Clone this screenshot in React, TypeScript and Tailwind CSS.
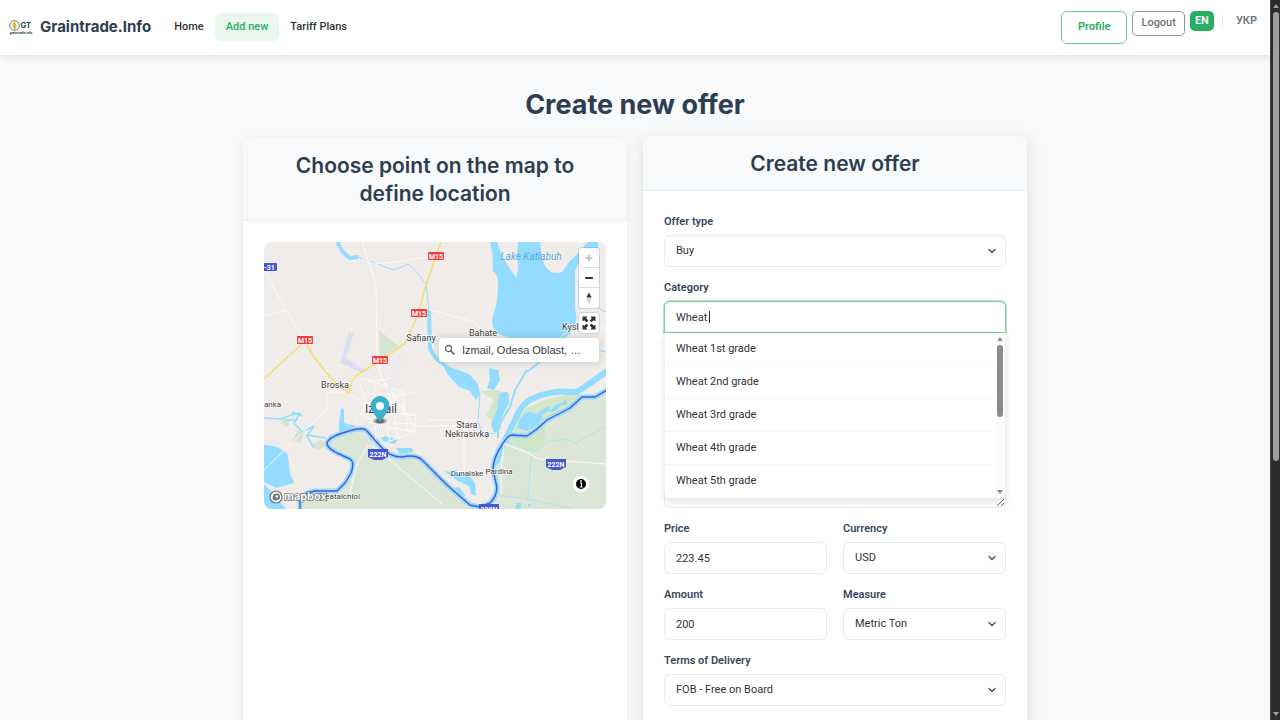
import { useState } from "react";
import type { ReactNode } from "react";
import { ChevronDown } from "lucide-react";

const grades = ["1st", "2nd", "3rd", "4th", "5th"];

const fieldClass =
  "block h-8 w-full appearance-none rounded-[6px] border border-[#e6edf0] bg-white px-[11px] text-[11px] text-[#333] outline-none";

const riverRoad =
  "M36 267V256L43 251L51 249H73L81 241L87 231Q91 220 86 217L73 211Q60 204 64 199Q67 194 85 189Q98 185 102 188L118 206Q126 215 138 215Q152 212 158 218L183 243L206 263L216 265L226 261Q235 252 232 241L229 228Q229 216 238 203Q244 193 248 193L263 194L273 187L283 178L306 166L318 155H331L343 148";

const Logo = () => (
  <svg viewBox="0 0 24 16" className="h-4 w-6 shrink-0" aria-hidden="true">
    <circle cx="5.5" cy="6.5" r="4.8" fill="#fff" stroke="#3c5a4c" strokeWidth="0.8" />
    <path d="M5.5 2.7C8.1 4.7 8.1 8.3 5.5 10.5C2.9 8.3 2.9 4.7 5.5 2.7Z" fill="#e9c64a" />
    <path d="M5.5 3.5V11" stroke="#a98a25" strokeWidth="0.5" />
    <text x="11.5" y="9" fontFamily="Inter, sans-serif" fontSize="7.5" fontWeight="700" fill="#26423c">GT</text>
    <text x="12" y="14.8" textAnchor="middle" fontFamily="Roboto, sans-serif" fontSize="3.4" fontWeight="700" fill="#26423c">
      graintrade.info
    </text>
  </svg>
);

const M15 = ({ x, y }: { x: number; y: number }) => (
  <g>
    <rect x={x - 8} y={y - 4} width="16" height="8" rx="1" fill="#f13c3f" />
    <text x={x} y={y + 2.5} textAnchor="middle" fontSize="7" fontWeight="700" fill="#fff">M15</text>
  </g>
);

const N222 = ({ x, y }: { x: number; y: number }) => (
  <g>
    <path d={`M${x - 10} ${y - 5}H${x + 10}V${y + 3}L${x + 4} ${y + 6}H${x - 4}L${x - 10} ${y + 3}Z`} fill="#4558cd" />
    <text x={x} y={y + 2.5} textAnchor="middle" fontSize="7" fontWeight="700" fill="#fff">222N</text>
  </g>
);

const MapDrawing = () => (
  <svg viewBox="0 0 342 267" className="block w-full" fontFamily="Roboto, sans-serif">
    <rect width="342" height="267" fill="#efecea" />
    {/* south bank */}
    <path d={`${riverRoad}V267Z`} fill="#dce6d6" />
    <path d="M115 88L134 104L116 117Z" fill="#d5e4d0" />
    <path d="M15 180L26 177L24 185ZM28 199L33 189L40 190L37 201ZM47 203L57 198L62 203L54 208Z" fill="#d5e4cc" />
    <path d="M216 149L232 148L246 152L240 168L230 180L222 174L230 158ZM227 128H236L232 140ZM254 178L262 166L281 158L305 152L318 152L306 164L283 176L263 192L249 191Z" fill="#d3e7c8" />
    <path d="M248 193L263 194L281 181L282 198L272 210L262 206L246 198Z" fill="#cfe6c4" />
    {/* industrial zone */}
    <path d="M85 89L90 91L82 116L94 124L104 128L98 131L85 125L76 121Z" fill="#dadff0" />
    {/* lakes */}
    <g fill="#93dcff">
      <path d="M226 0Q229 9 229 29Q235 33 234 45L233 59L229 74Q226 84 234 92L246 96H276L296 97Q304 96 308 88Q315 76 311 68L311 29L316 18L334 8V0H324L316 9L306 19L298 30Q294 32 287 30Q280 25 278 16L276 0H254L253 16Q256 26 252 36L239 16L233 0Z" />
      <path d="M176 118L186 125L205 132L214 142L216 152L212 158L206 149L195 145L184 133Z" />
      <path d="M225 126L234 128L236 138L230 148L223 146L226 138ZM256 99L272 101L258 118L261 110Z" />
      <path d="M235 151L244 150L245 161L238 175L236 188L230 191L227 182L233 168Z" />
      <path d="M253 186Q256 171 266 170L279 174L275 182L263 189ZM272 172L284 164L286 168L276 174ZM285 170L291 163L298 161L292 169ZM295 164L302 157L303 162Z" />
      <path d="M0 203Q14 202 24 213L26 232L30 241L12 246L0 240ZM0 242L10 252L22 267H0Z" />
      <path d="M75 196L75 182L77 166L80 167L80 181L92 184L85 191ZM117 196Q120 192 134 198L130 202L120 200ZM132 206L148 206L149 210L136 212Z" />
      <path d="M181 229L192 228L204 232L211 241L212 254L207 252L205 244L194 239L184 232ZM191 246L195 245L199 250L202 254L196 252Z" />
      <path d="M253 261L258 261L256 267H251ZM264 262L267 262L265 266Z" />
    </g>
    <g fill="none" stroke="#93dcff" strokeLinejoin="round">
      <path d="M73 -2Q77 11 86 16L94 15" strokeWidth="4" />
      <path d="M94 15L130 28L144 22L151 28L162 42L165 68" strokeWidth="1" />
      <path d="M165 68L166 106Q169 116 180 122" strokeWidth="4" />
      <path d={riverRoad} strokeWidth="5" />
      <path d="M231 222L240 200L251 178Q258 160 270 156Q289 148 304 150H313L325 142L343 129" strokeWidth="6" />
      <path d="M263 128L251 148L246 165L234 185V196M300 112L278 118L263 130" strokeWidth="2" />
      <path d="M0 176L17 177L27 173L36 171L30 181L38 190L50 184L43 194L50 206M20 178L34 178M43 193L62 196M28 170L38 174" strokeWidth="1.5" />
      <path d="M216 150L214 180L218 190L231 192M326 106L342 110M326 62L342 70" strokeWidth="1" />
      <path d="M275 208L283 200L300 197L312 201L328 192L342 184M267 214L264 256M236 254L260 256L310 267M240 202L245 200L262 207L275 210" stroke="#aee0ee" strokeWidth="1" />
    </g>
    {/* minor roads */}
    <g fill="none" stroke="#fbfaf9" strokeWidth="1">
      <path d="M0 28L22 68L41 99M0 74L22 68M98 0L112 42L113 118L118 138M98 16L110 22L130 20L165 15M165 68L182 72L210 80L220 92M342 112L296 96L322 72L342 88" />
      <path d="M0 228L60 170H63V128M63 150H85M118 136L150 184H210M200 184V230L183 229M164 178H215" />
      <path d="M240 202L262 210L275 217L342 222M240 202L237 232V252M86 252L92 225L104 203L113 207L178 262M86 252L60 258" />
      <path d="M85 151L110 170L112 200M96 142L102 160L118 158L150 150M98 136L140 150L138 172L152 174L150 190L118 202M104 140L130 136M100 152H140M100 160L142 166M118 158L126 200M128 158L134 196M140 160L144 190M96 172L114 180L152 182M104 180L148 190M110 140L112 168M90 178L104 164M120 138L130 170M122 172H152M120 186L150 188" />
    </g>
    <path d="M141 103L130 134L119 160L114 192" fill="none" stroke="#cfdbea" strokeWidth="2" />
    <path d="M141 103L130 134L119 160L114 192" fill="none" stroke="#fff" strokeWidth="1" />
    {/* highways */}
    <g fill="none" stroke="#f7dd72" strokeWidth="1.6" strokeLinejoin="round">
      <path d="M0 137L41 99L50 115L66 135L73 143L85 151L88 139L93 133L116 119L141 101L155 71L161 46L177 0" />
    </g>
    <path d={riverRoad} fill="none" stroke="#5058d0" strokeWidth="1.4" strokeLinejoin="round" />
    {/* road shields */}
    <M15 x={172} y={14} />
    <M15 x={155} y={71} />
    <M15 x={41} y={98} />
    <M15 x={116} y={118} />
    <rect x="-1" y="21" width="14" height="8" rx="1" fill="#4558cd" />
    <text x="0" y="27.5" fontSize="7" fontWeight="700" fill="#fff">-31</text>
    <N222 x={114} y={212} />
    <N222 x={292} y={222} />
    <N222 x={225} y={267} />
    {/* place names */}
    <g fontSize="9" fill="#3d3d3d" stroke="#fff" strokeOpacity="0.7" strokeWidth="1.5" paintOrder="stroke" textAnchor="middle">
      <text x="157" y="99">Safiany</text>
      <text x="219" y="94">Bahate</text>
      <text x="298" y="88" textAnchor="start">Kysly</text>
      <text x="71" y="146">Broska</text>
      <text x="0" y="165" fontSize="8" textAnchor="start">anka</text>
      <text x="203" y="186">Stara</text>
      <text x="203" y="195">Nekrasivka</text>
      <text x="203" y="234" fontSize="8">Dunaiske</text>
      <text x="235" y="232" fontSize="8">Pardina</text>
      <text x="76" y="257" fontSize="8">Ceatalchioi</text>
      <text x="117" y="171" fontSize="12">Izmail</text>
    </g>
    <text x="267" y="18" textAnchor="middle" fontSize="10" fontStyle="italic" fill="#57aedb">Lake Katlabuh</text>
    {/* marker */}
    <ellipse cx="116" cy="179" rx="7" ry="3" fill="#000" opacity="0.3" />
    <ellipse cx="116" cy="179" rx="4" ry="2" fill="#000" opacity="0.4" />
    <path d="M116 180C112 173 107 169 107 163.500A9 9 0 0 1 125 163.500C125 169 120 173 116 180Z" fill="#3fb1ce" stroke="#3397b1" strokeWidth="0.8" />
    <circle cx="116" cy="164" r="4" fill="#fff" />
    {/* attribution */}
    <circle cx="12" cy="255" r="6" fill="#fff" fillOpacity="0.8" stroke="#777" strokeWidth="1.2" />
    <path d="M9 258C8 253.5 10 251.5 12.5 251.5A3.2 3.2 0 0 1 13 258Q11 258.8 9 258Z" fill="#777" />
    <circle cx="12.8" cy="254.5" r="1.3" fill="#fff" />
    <text x="20" y="258" fontFamily="Inter, sans-serif" fontSize="11" fontWeight="600" fill="#fff" stroke="#777" strokeWidth="1.4" paintOrder="stroke">mapbox</text>
    <circle cx="317" cy="242" r="8" fill="#fff" />
    <circle cx="317" cy="242" r="5" fill="#000" />
    <path d="M316 241H317.5V245M315.8 245H318.8" stroke="#fff" strokeWidth="1.2" fill="none" />
    <circle cx="317" cy="239" r="0.9" fill="#fff" />
  </svg>
);

const MapPanel = () => (
  <div className="relative overflow-hidden rounded-[8px]">
    <MapDrawing />
    <div className="absolute top-1.5 right-[7px] flex flex-col items-end gap-[5px]">
      <div className="flex w-5 flex-col divide-y divide-[#ddd] rounded-[3px] bg-white shadow-[0_0_0_1px_rgba(0,0,0,0.1)]">
        <button aria-label="Zoom in" className="flex h-5 items-center justify-center">
          <svg viewBox="0 0 20 20" className="size-5"><path d="M10 6.500V13.500M6.500 10H13.500" stroke="#bbb" strokeWidth="1.6" /></svg>
        </button>
        <button aria-label="Zoom out" className="flex h-5 items-center justify-center">
          <svg viewBox="0 0 20 20" className="size-5"><path d="M7 10H13" stroke="#333" strokeWidth="2.2" strokeLinecap="round" /></svg>
        </button>
        <button aria-label="Reset bearing" className="flex h-5 items-center justify-center">
          <svg viewBox="0 0 20 20" className="size-5">
            <path d="M10 4.5L7.3 9.5H12.7Z" fill="#333" />
            <path d="M10 15.5L7.3 10.5H12.7Z" fill="#ccc" />
          </svg>
        </button>
      </div>
      <button aria-label="Full screen" className="size-5 rounded-[3px] bg-white shadow-[0_0_0_1px_rgba(0,0,0,0.1)]">
        <svg viewBox="0 0 20 20" className="size-5">
          <path
            d="M3.5 3.5H8.5L7.2 5.2L9.3 7.6L7.6 9.3L5.2 7.2L3.5 8.5ZM16.5 3.5V8.5L14.8 7.2L12.4 9.3L10.7 7.6L12.8 5.2L11.5 3.5ZM3.5 16.5V11.5L5.2 12.8L7.6 10.7L9.3 12.4L7.2 14.8L8.5 16.5ZM16.5 16.5H11.5L12.8 14.8L10.7 12.4L12.4 10.7L14.8 12.8L16.5 11.5Z"
            fill="#333"
          />
        </svg>
      </button>
      <div className="flex h-6 w-40 items-center gap-1.5 rounded-[3px] bg-white px-[5px] shadow-[0_0_7px_2px_rgba(0,0,0,0.1)]">
        <svg viewBox="0 0 12 12" className="size-3 shrink-0" aria-hidden="true">
          <circle cx="4.5" cy="4.5" r="3" fill="none" stroke="#666" strokeWidth="1.3" />
          <path d="M6.8 6.8L10.5 10.5" stroke="#666" strokeWidth="1.7" />
        </svg>
        <input
          aria-label="Search location"
          defaultValue="Izmail, Odesa Oblast, …"
          className="w-full min-w-0 bg-transparent font-['Liberation_Sans',sans-serif] text-[11px] text-[#404040] outline-none"
        />
      </div>
    </div>
  </div>
);

const Field = ({ id, label, children }: { id: string; label: string; children: ReactNode }) => (
  <div className="min-w-0 flex-1">
    <label htmlFor={id} className="mb-[3px] block text-[11px] leading-5 font-semibold text-[#34495e]">
      {label}
    </label>
    {children}
  </div>
);

const SelectField = ({ id, label, value }: { id: string; label: string; value: string }) => (
  <Field id={id} label={label}>
    <div className="relative">
      <select id={id} className={fieldClass}>
        <option>{value}</option>
      </select>
      <ChevronDown className="pointer-events-none absolute top-2.5 right-2 size-3 text-[#454b51]" strokeWidth={2.5} />
    </div>
  </Field>
);

const Suggestions = () => (
  <div className="absolute top-full right-0 left-0 z-10 flex overflow-hidden rounded-b-[6px] border border-t-0 border-[#f0f0f0] bg-white shadow-[0_3px_8px_rgba(0,0,0,0.12)]">
    <ul className="flex-1">
      {grades.map((grade) => (
        <li key={grade} className="flex h-[33px] items-center border-b border-[#f8f8f8] px-[11px] text-[11px] text-[#333]">
          Wheat {grade} grade
        </li>
      ))}
    </ul>
    {/* list scrollbar */}
    <div className="flex w-2.5 flex-col items-center bg-[#fcfcfc] py-1">
      <svg viewBox="0 0 6 4" className="h-1 w-1.5"><path d="M3 0L6 4H0Z" fill="#8b8b8b" /></svg>
      <div className="mt-1 h-[72px] w-1.5 rounded-full bg-[#8b8b8b]" />
      <svg viewBox="0 0 6 4" className="mt-auto h-1 w-1.5"><path d="M3 4L6 0H0Z" fill="#8b8b8b" /></svg>
    </div>
  </div>
);

const Header = () => (
  <header className="relative z-20 flex h-[55px] shrink-0 items-start justify-between bg-white pr-2 pl-[9px] shadow-[0_2px_8px_rgba(0,0,0,0.1)]">
    <nav className="flex h-[54px] items-center text-[11px] font-medium text-[#333]">
      <a href="#home" className="mr-3 flex items-center gap-[7px] font-[Inter,sans-serif] text-[15px] font-bold text-[#2c3e50]">
        <Logo />
        Graintrade.Info
      </a>
      <a href="#home" className="px-[11px] py-1.5">Home</a>
      <a href="#new" className="rounded-[6px] bg-[#e9f7ef] px-[11px] py-1.5 text-[#27ae60]">Add new</a>
      <a href="#tariffs" className="px-[11px] py-1.5">Tariff Plans</a>
    </nav>
    <div className="flex items-start pt-[11px]">
      <button className="h-[33px] rounded-[6px] border border-[#6cc892] px-4 text-[11px] font-semibold text-[#27ae60]">Profile</button>
      <button className="ml-[5px] h-[25px] rounded-[5px] border border-[#8d9499] px-2 text-[11px] font-medium text-[#6c757d]">Logout</button>
      <button className="ml-[5px] h-5 rounded-[5px] bg-[#27ae60] px-[5px] text-[11px] font-semibold text-white">EN</button>
      <span className="mx-2 mt-1 h-3 w-px bg-[#e6ebee]" />
      <button className="h-5 px-[5px] text-[11px] font-semibold text-[#6c757d]">УКР</button>
    </div>
  </header>
);

const App = () => {
  const [category, setCategory] = useState("Wheat ");

  return (
    <div className="flex h-screen overflow-hidden bg-[#f8f9fb] font-[Roboto,sans-serif]">
      <div className="flex min-w-0 flex-1 flex-col">
        <Header />
        <main className="mx-auto flex w-full max-w-[784px] flex-1 flex-col">
          <h1 className="mt-8 mb-4 text-center font-[Inter,sans-serif] text-[27px] leading-[35px] font-bold text-[#2c3e50]">Create new offer</h1>
          <div className="flex flex-1 gap-4">
            <section className="flex-1 rounded-t-[8px] bg-white shadow-[0_2px_8px_rgba(0,0,0,0.08)]">
              <h2 className="rounded-t-[8px] border-b border-[#e9eef1] bg-[#f8f9fb] px-5 pt-[14px] pb-3 text-center font-[Inter,sans-serif] text-[21px] leading-7 font-semibold text-[#2c3e50]">
                Choose point on the map to define location
              </h2>
              <div className="p-[21px]">
                <MapPanel />
              </div>
            </section>

            <section className="flex-1 -translate-y-0.5 rounded-t-[8px] bg-white shadow-[0_4px_16px_rgba(0,0,0,0.12)]">
              <h2 className="rounded-t-[8px] border-b border-[#e3edf0] bg-[#f8f9fb] px-5 pt-[14px] pb-3 text-center font-[Inter,sans-serif] text-[21px] leading-7 font-semibold text-[#2c3e50]">
                Create new offer
              </h2>
              <form className="flex flex-col gap-[11px] p-[21px]">
                <SelectField id="offer-type" label="Offer type" value="Buy" />
                <Field id="category" label="Category">
                  <div className="relative">
                    <input
                      id="category"
                      value={category}
                      autoComplete="off"
                      onChange={(e) => setCategory(e.target.value)}
                      className="block h-8 w-full rounded-t-[6px] border border-[#7dcf9f] bg-white px-[11px] text-[11px] text-[#333] shadow-[0_0_0_1px_#b5e3c8] outline-none"
                    />
                    <span className="pointer-events-none absolute top-2.5 left-[45px] h-3 w-px bg-[#333]" />
                    <Suggestions />
                  </div>
                </Field>
                <textarea aria-label="Description" className="block h-[164px] w-full rounded-[6px] border border-[#e6edf0] bg-white" />
                <div className="flex gap-4">
                  <Field id="price" label="Price">
                    <input id="price" defaultValue="223.45" className={fieldClass} />
                  </Field>
                  <SelectField id="currency" label="Currency" value="USD" />
                </div>
                <div className="flex gap-4">
                  <Field id="amount" label="Amount">
                    <input id="amount" defaultValue="200" className={fieldClass} />
                  </Field>
                  <SelectField id="measure" label="Measure" value="Metric Ton" />
                </div>
                <SelectField id="terms" label="Terms of Delivery" value="FOB - Free on Board" />
              </form>
            </section>
          </div>
        </main>
      </div>

      {/* page scrollbar */}
      <div className="flex w-2.5 shrink-0 flex-col items-center border-l border-[#444] bg-[#2c2c2c] py-1">
        <svg viewBox="0 0 6 4" className="h-1 w-1.5"><path d="M3 0L6 4H0Z" fill="#9f9f9f" /></svg>
        <div className="mt-1 h-[449px] w-1.5 rounded-full bg-[#9f9f9f]" />
        <svg viewBox="0 0 6 4" className="mt-auto h-1 w-1.5"><path d="M3 4L6 0H0Z" fill="#9f9f9f" /></svg>
      </div>
    </div>
  );
};

export default App;
